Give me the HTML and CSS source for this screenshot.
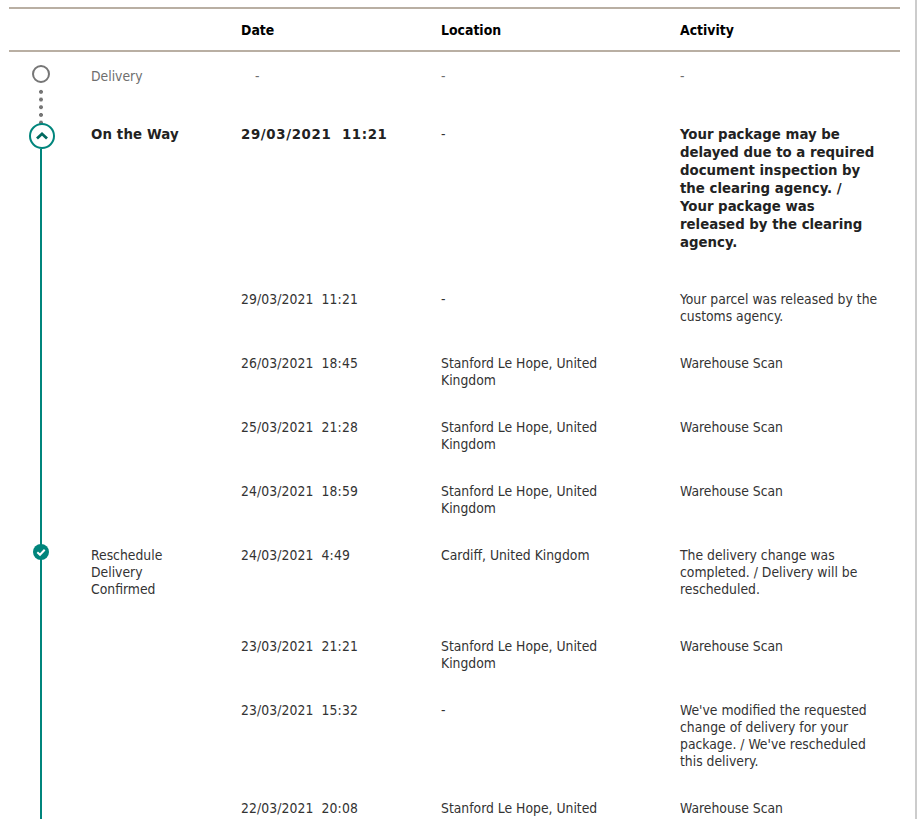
FILE: index.html
```html
<!DOCTYPE html>
<html lang="en">
<head>
<meta charset="utf-8">
<title>Tracking history</title>
<link rel="stylesheet" href="styles.css">
</head>
<body>
<div class="page">
<table class="history">
<colgroup><col class="c-icon"><col class="c-status"><col class="c-date"><col class="c-loc"><col class="c-act"></colgroup>
<thead><tr><th></th><th></th><th>Date</th><th>Location</th><th>Activity</th></tr></thead>
<tbody>
<tr class="status future"><td class="rail"><span class="ring"></span></td><td class="name">Delivery</td><td><span class="dash">-</span></td><td class="place">-</td><td>-</td></tr>
<tr class="status current"><td class="rail"><span class="open"><svg width="26" height="26" viewBox="0 0 26 26"><circle cx="13" cy="13" r="12" fill="#fff" stroke="#00857c" stroke-width="2"/><path d="M8 15.500 13 10.800l5 4.700" fill="none" stroke="#00695f" stroke-width="2.800"/></svg></span></td><td class="name">On the Way</td><td class="when">29/03/2021&nbsp; 11:21</td><td class="place plain">-</td><td class="activity">Your package may be delayed due to a required document inspection by the clearing agency. / Your package was released by the clearing agency.</td></tr>
<tr><td class="rail"></td><td class="name"></td><td class="when">29/03/2021&nbsp; 11:21</td><td class="place">-</td><td>Your parcel was released by the customs agency.</td></tr>
<tr><td class="rail"></td><td class="name"></td><td class="when">26/03/2021&nbsp; 18:45</td><td class="place">Stanford Le Hope, United Kingdom</td><td>Warehouse Scan</td></tr>
<tr><td class="rail"></td><td class="name"></td><td class="when">25/03/2021&nbsp; 21:28</td><td class="place">Stanford Le Hope, United Kingdom</td><td>Warehouse Scan</td></tr>
<tr><td class="rail"></td><td class="name"></td><td class="when">24/03/2021&nbsp; 18:59</td><td class="place">Stanford Le Hope, United Kingdom</td><td>Warehouse Scan</td></tr>
<tr class="status done"><td class="rail"><span class="check"><svg width="16" height="16" viewBox="0 0 16 16"><circle cx="8" cy="8" r="8" fill="#00857c"/><path d="M4.300 8.200 7 10.800 11.700 5.700" fill="none" stroke="#fff" stroke-width="2"/></svg></span></td><td class="name">Reschedule Delivery Confirmed</td><td class="when">24/03/2021&nbsp; 4:49</td><td class="place">Cardiff, United Kingdom</td><td>The delivery change was completed. / Delivery will be rescheduled.</td></tr>
<tr><td class="rail"></td><td class="name"></td><td class="when">23/03/2021&nbsp; 21:21</td><td class="place">Stanford Le Hope, United Kingdom</td><td>Warehouse Scan</td></tr>
<tr><td class="rail"></td><td class="name"></td><td class="when">23/03/2021&nbsp; 15:32</td><td class="place">-</td><td>We've modified the requested change of delivery for your package. / We've rescheduled this delivery.</td></tr>
<tr><td class="rail"></td><td class="name"></td><td class="when">22/03/2021&nbsp; 20:08</td><td class="place">Stanford Le Hope, United Kingdom</td><td>Warehouse Scan</td></tr>
</tbody>
</table>
</div>
</body>
</html>
```
FILE: styles.css
```css
html, body { margin: 0; padding: 0; height: 819px; overflow: hidden; background: #fff; }
.page { box-sizing: border-box; width: 917px; height: 819px; overflow: hidden; padding: 7px 0 0 9px; border-right: 2px solid #ccc; }
.history { width: 891px; border-collapse: collapse; table-layout: fixed; font-family: "DejaVu Sans", sans-serif; font-stretch: condensed; font-size: 13.800px; line-height: 17px; color: #333; }
.c-icon { width: 82px; }
.c-status { width: 150px; }
.c-date { width: 200px; }
.c-loc { width: 239px; }
.history th { text-align: left; font-family: "DejaVu Sans", sans-serif; font-stretch: condensed; font-size: 13.900px; font-weight: 700; color: #000; height: 39px; padding: 2px 0 0; border-top: 2px solid #b9afa3; border-bottom: 2px solid #b9afa3; }
.history td { vertical-align: top; padding: 16px 20px 14px 0; }
.history td.rail { padding: 0; position: relative; }
.history td.name { padding-right: 40px; }
.history td.place { padding-right: 40px; }
.when { letter-spacing: 0.100px; }
.rail::before { content: ""; position: absolute; left: 31px; top: 0; bottom: 0; width: 2px; background: #00857c; }
.status td { padding-bottom: 24px; }
.future { color: #6e6e6e; }
.future .rail::before { top: 36px; bottom: -16px; width: 4px; left: 30px; background: radial-gradient(circle, #767676 1.800px, transparent 2.200px) 0 0 / 4px 7.700px repeat-y; }
.current td { font-weight: 700; font-size: 14.800px; line-height: 18px; color: #222; }
.history .current td.name { letter-spacing: 0.150px; }
.history .current td.when { letter-spacing: 0.650px; }
.history .current td.plain { font-weight: 400; font-size: 13.800px; color: #333; }
.history .current td.activity { padding-right: 25px; }
.current .rail::before { top: 40px; }
.ring { position: absolute; left: 23px; top: 13px; width: 14px; height: 14px; border: 2px solid #767676; border-radius: 50%; background: #fff; z-index: 1; }
.open { position: absolute; left: 20px; top: 14px; z-index: 1; display: block; height: 26px; }
.check { position: absolute; left: 24px; top: 13px; z-index: 1; display: block; height: 16px; }
.dash { padding-left: 14px; }
```
